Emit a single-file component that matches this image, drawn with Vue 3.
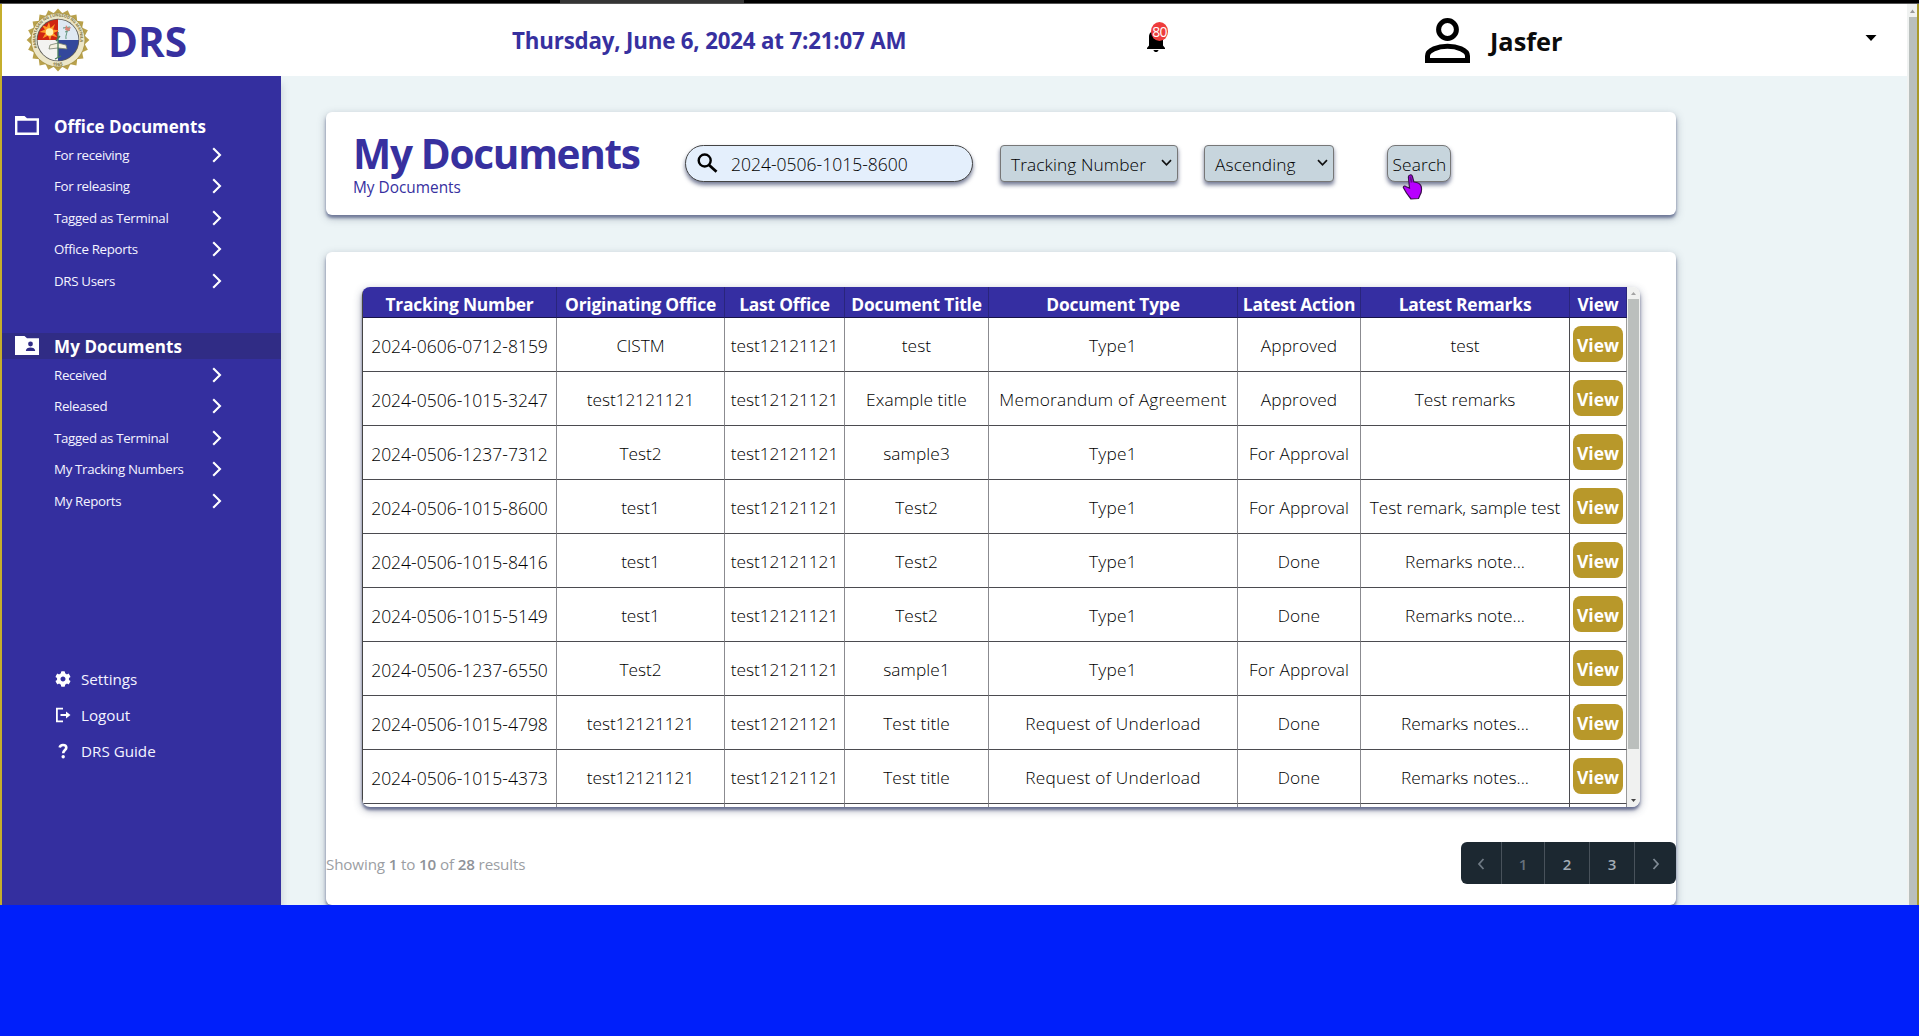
<script setup>
const menus = [
  { title: 'Office Documents', active: false, items: ['For receiving', 'For releasing', 'Tagged as Terminal', 'Office Reports', 'DRS Users'] },
  { title: 'My Documents', active: true, items: ['Received', 'Released', 'Tagged as Terminal', 'My Tracking Numbers', 'My Reports'] },
]
const columns = [
  { label: 'Tracking Number', cls: 'c1' },
  { label: 'Originating Office', cls: 'c2' },
  { label: 'Last Office', cls: 'c3' },
  { label: 'Document Title', cls: 'c4' },
  { label: 'Document Type', cls: 'c5' },
  { label: 'Latest Action', cls: 'c6' },
  { label: 'Latest Remarks', cls: 'c7' },
  { label: 'View', cls: 'c8' },
]
const rows = [
  ['2024-0606-0712-8159', 'CISTM', 'test12121121', 'test', 'Type1', 'Approved', 'test'],
  ['2024-0506-1015-3247', 'test12121121', 'test12121121', 'Example title', 'Memorandum of Agreement', 'Approved', 'Test remarks'],
  ['2024-0506-1237-7312', 'Test2', 'test12121121', 'sample3', 'Type1', 'For Approval', ''],
  ['2024-0506-1015-8600', 'test1', 'test12121121', 'Test2', 'Type1', 'For Approval', 'Test remark, sample test'],
  ['2024-0506-1015-8416', 'test1', 'test12121121', 'Test2', 'Type1', 'Done', 'Remarks note...'],
  ['2024-0506-1015-5149', 'test1', 'test12121121', 'Test2', 'Type1', 'Done', 'Remarks note...'],
  ['2024-0506-1237-6550', 'Test2', 'test12121121', 'sample1', 'Type1', 'For Approval', ''],
  ['2024-0506-1015-4798', 'test12121121', 'test12121121', 'Test title', 'Request of Underload', 'Done', 'Remarks notes...'],
  ['2024-0506-1015-4373', 'test12121121', 'test12121121', 'Test title', 'Request of Underload', 'Done', 'Remarks notes...'],
]
const ring = Array.from({ length: 20 }, (_, i) => i * 18)
</script>

<template>
  <div class="screen">
    <div class="topbar"><div class="tab"></div></div>
    <div class="window">
      <div class="page">
        <header class="header">
          <svg class="seal" viewBox="0 0 64 64">
            <defs>
              <clipPath id="disc"><circle cx="32" cy="32" r="20.5" /></clipPath>
              <path id="arc" d="M11.5 39.5A22.3 22.3 0 1 1 52.5 39.5" />
              <path id="arcb" d="M20 55A26 26 0 0 0 44 55" />
            </defs>
            <g fill="#b9a14b">
              <path v-for="a in ring" :key="a" d="M27 6L32 0.6L37 6L36 12H28Z" :transform="`rotate(${a} 32 32)`" />
            </g>
            <circle cx="32" cy="32" r="27" fill="#ece6c8" stroke="#a58f3d" stroke-width=".8" />
            <circle cx="32" cy="32" r="21.3" fill="#5b5a55" />
            <g clip-path="url(#disc)">
              <rect x="11" y="11" width="21" height="21" fill="#cf2412" />
              <rect x="32" y="11" width="21" height="21" fill="#dfe9f3" />
              <rect x="11" y="32" width="21" height="21" fill="#f3f3f1" />
              <rect x="32" y="32" width="21" height="21" fill="#33489c" />
              <path d="M23 14l1.500 6 4.500-4-2 5.500 6 1-5.500 2.500 4 4.500-6-2-1.500 5-2-5-5.500 3 3-5.500-6-1 5.500-2.500-3.500-4.500 5.500 2z" fill="#ff9b25" />
              <circle cx="23.500" cy="24" r="3.800" fill="#fff3b0" />
              <path d="M40 31c-1-4 2-6 1-11M39 24l5-2M37 20l7-1" stroke="#5d927a" fill="none" />
              <path d="M40 17l2 3 3-1-2 4-4-1z" fill="#dc8375" />
              <path d="M24 37l8-2 8 2 1 4-9-1-9 1z" fill="#f4f1df" stroke="#77806d" stroke-width=".8" />
              <path d="M32 24v25M29 51l6-3M30 33l4-5" stroke="#477d5c" stroke-width="1.300" fill="none" />
            </g>
            <text font-family="Open Sans, sans-serif" font-size="4" font-weight="700" fill="#827743"><textPath href="#arc" textLength="82">PAMANTASAN NG LUNGSOD NG MAYNILA</textPath></text>
            <text font-family="Open Sans, sans-serif" font-size="4.500" font-weight="700" fill="#827743"><textPath href="#arcb" startOffset="7">1965</textPath></text>
          </svg>
          <div class="brand">DRS</div>
          <div class="date">Thursday, June 6, 2024 at 7:21:07 AM</div>
          <div class="bell">
            <svg width="18" height="24" viewBox="0 0 18 24"><path d="M0 21v-1l2-2.500V9c0-4 2-6 7-6s7 3 7 7v7.500l2 2.500v1zM6.500 22h5c-.3 1.400-1.300 2-2.500 2s-2.200-.6-2.500-2z" /></svg>
            <span class="badge">80</span>
          </div>
          <svg class="person" viewBox="0 0 45 45"><circle cx="22.500" cy="11.500" r="8.900" fill="none" stroke="#000" stroke-width="5" /><path d="M2.500 42.500V38C2.500 32 13 28.200 22.500 28.200S42.500 32 42.500 38V42.500Z" fill="none" stroke="#000" stroke-width="5" /></svg>
          <div class="user">Jasfer</div>
          <svg class="caret" width="12" height="6" viewBox="0 0 12 6"><path d="M0.500 0h11L6 6z" /></svg>
        </header>
        <div class="body">
          <nav class="sidebar">
            <section v-for="m in menus" :key="m.title" class="group">
              <div class="group-title" :class="{ active: m.active }">
                <svg v-if="m.active" width="24" height="19" viewBox="0 0 24 19"><path d="M0 0h9.500l2.500 2.300h12V19H0z" fill="#fff" /><circle cx="15.500" cy="8" r="2.400" fill="#302c85" /><path d="M10.800 15c0-4.600 9.400-4.600 9.400 0z" fill="#302c85" /></svg>
                <svg v-else width="24" height="19" viewBox="0 0 24 19"><path fill-rule="evenodd" d="M0 0h9.500l2.500 2.300h12V19H0zM2.400 4.800v11.800h19.200V4.800z" fill="#fff" /></svg>
                <span>{{ m.title }}</span>
              </div>
              <div v-for="it in m.items" :key="it" class="item">
                <span>{{ it }}</span>
                <svg width="10" height="16" viewBox="0 0 10 16"><path d="M1.200 1.200L8 8l-6.800 6.800" fill="none" stroke="#fff" stroke-width="2.100" /></svg>
              </div>
            </section>
            <div class="tools">
              <div class="tool">
                <svg width="16" height="16" viewBox="0 0 512 512"><path fill="#fff" d="M487.400 315.700l-42.600-24.600c4.300-23.200 4.300-47 0-70.200l42.600-24.600c4.900-2.800 7.100-8.600 5.500-14-11.100-35.600-30-67.800-54.700-94.600-3.800-4.100-10-5.100-14.800-2.300L380.800 110c-17.900-15.400-38.500-27.300-60.800-35.100V25.800c0-5.600-3.900-10.500-9.400-11.700-36.700-8.200-74.300-7.800-109.200 0-5.500 1.200-9.400 6.100-9.400 11.700V75c-22.200 7.900-42.800 19.800-60.800 35.100L88.700 85.500c-4.900-2.800-11-1.900-14.800 2.300-24.700 26.700-43.600 58.900-54.700 94.600-1.700 5.400.6 11.200 5.500 14L67.300 221c-4.300 23.200-4.300 47 0 70.200l-42.600 24.600c-4.900 2.800-7.100 8.600-5.500 14 11.100 35.600 30 67.800 54.700 94.600 3.800 4.100 10 5.100 14.800 2.300l42.600-24.600c17.900 15.400 38.500 27.300 60.800 35.100v49.200c0 5.600 3.900 10.500 9.400 11.700 36.700 8.200 74.300 7.800 109.200 0 5.500-1.200 9.400-6.100 9.400-11.700v-49.200c22.200-7.900 42.800-19.800 60.800-35.100l42.600 24.600c4.900 2.800 11 1.900 14.800-2.300 24.700-26.700 43.600-58.900 54.700-94.600 1.500-5.500-.7-11.300-5.600-14.100zM256 336c-44.100 0-80-35.900-80-80s35.900-80 80-80 80 35.900 80 80-35.900 80-80 80z" /></svg>
                <span>Settings</span>
              </div>
              <div class="tool">
                <svg width="16" height="16" viewBox="0 0 16 16"><path d="M8 1.700H1.900v12.600H8M5.500 8h7" fill="none" stroke="#fff" stroke-width="1.800" /><path d="M11 4.500L15.500 8 11 11.500z" fill="#fff" /></svg>
                <span>Logout</span>
              </div>
              <div class="tool">
                <svg width="16" height="16" viewBox="0 0 16 16"><path d="M4.700 4.600C5 2.900 6.200 2 8 2c2 0 3.300 1 3.300 2.700C11.300 7 8.200 7 8.200 10.200" fill="none" stroke="#fff" stroke-width="2.600" /><circle cx="8.200" cy="13.800" r="1.700" fill="#fff" /></svg>
                <span>DRS Guide</span>
              </div>
            </div>
          </nav>
          <main class="main">
            <section class="card head">
              <div class="titles">
                <h1>My Documents</h1>
                <div class="sub">My Documents</div>
              </div>
              <div class="search">
                <svg width="21" height="20" viewBox="0 0 21 20"><circle cx="7.700" cy="7.500" r="6" fill="none" stroke="#000" stroke-width="2.400" /><path d="M12 12l7.500 6.800" stroke="#000" stroke-width="2.800" /></svg>
                <span>2024-0506-1015-8600</span>
              </div>
              <div class="select s1"><span>Tracking Number</span><svg width="11" height="8" viewBox="0 0 11 8"><path d="M1 1.200l4.500 4.600L10 1.200" fill="none" stroke="#111" stroke-width="1.700" /></svg></div>
              <div class="select s2"><span>Ascending</span><svg width="11" height="8" viewBox="0 0 11 8"><path d="M1 1.200l4.500 4.600L10 1.200" fill="none" stroke="#111" stroke-width="1.700" /></svg></div>
              <div class="btn"><span>Search</span>
                <svg class="cursor" width="22" height="26" viewBox="0 0 22 26"><path d="M8 1C9 .5 10 1.200 10.400 2.500l1.500 5.500c3 .2 6.500 1.500 7.300 4.500.8 3.500.3 6-1.200 8.500l-1.500 3.500-7.500.5C6.500 22 3 17 1.300 13.500c0-1.500 1.700-2 3-.8L7.500 14 6.400 3C6.400 2 7 1.300 8 1z" fill="#b800ff" stroke="#39104d" stroke-width="1.200" /><path d="M8.200 2.500l1.500 6" stroke="#6b0c92" stroke-width="2" /></svg>
              </div>
            </section>
            <section class="card list">
              <div class="frame">
                <table>
                  <thead><tr><th v-for="c in columns" :key="c.cls" :class="c.cls">{{ c.label }}</th></tr></thead>
                  <tbody>
                    <tr v-for="r in rows" :key="r[0]">
                      <td v-for="(v, i) in r" :key="i">{{ v }}</td>
                      <td class="act"><div class="view">View</div></td>
                    </tr>
                    <tr><td v-for="c in columns" :key="c.cls"></td></tr>
                  </tbody>
                </table>
                <div class="vbar">
                  <svg width="7" height="12" viewBox="0 0 7 12"><path d="M1 8l2.500-3L6 8z" fill="#a3a3a3" /></svg>
                  <div class="thumb"></div>
                  <svg class="down" width="7" height="12" viewBox="0 0 7 12"><path d="M1 4l2.500 3L6 4z" fill="#444" /></svg>
                </div>
              </div>
              <div class="foot">
                <div class="showing">Showing <b>1</b> to <b>10</b> of <b>28</b> results</div>
                <div class="pager">
                  <span class="p1"><svg width="8" height="12" viewBox="0 0 8 12"><path d="M6.500 1L2 6l4.500 5" fill="none" stroke="#6f7a84" stroke-width="1.800" /></svg></span>
                  <span class="p2">1</span>
                  <span class="p3">2</span>
                  <span class="p3">3</span>
                  <span class="p4"><svg width="8" height="12" viewBox="0 0 8 12"><path d="M1.500 1L6 6l-4.500 5" fill="none" stroke="#7f8a94" stroke-width="1.800" /></svg></span>
                </div>
              </div>
            </section>
          </main>
        </div>
      </div>
      <div class="pagebar">
        <svg width="7" height="13" viewBox="0 0 7 13"><path d="M1 9l2.500-3.500L6 9z" fill="#999" /></svg>
        <div class="pagethumb"></div>
      </div>
    </div>
    <div class="bottom"></div>
  </div>
</template>

<style>
body { margin: 0; overflow: hidden; }
</style>

<style scoped>
* { box-sizing: border-box; }
.screen { width: 1919px; height: 1036px; display: flex; flex-direction: column; overflow: hidden; font-family: "Open Sans", "Noto Sans", sans-serif; white-space: nowrap; }
.screen svg { flex: none; display: block; }
.topbar { height: 4px; flex: none; background: #000; border-bottom: 1px solid #555; display: flex; }
.tab { width: 184px; margin-left: 560px; background: #353535; }
.window { height: 901px; flex: none; display: flex; border-left: 2px solid #c5ae2c; border-right: 2px solid #a9992a; }
.page { width: 1905px; display: flex; flex-direction: column; background: #ecf4f6; overflow: hidden; }
.pagebar { width: 10px; background: #f0f2f1; display: flex; flex-direction: column; align-items: center; }
.pagethumb { width: 8px; margin-left: 2px; flex: 1; background: #b9bfbd; }
.header { height: 72px; flex: none; background: #fff; display: flex; align-items: center; }
.seal { width: 64px; height: 64px; margin-left: 24px; margin-top: -1px; }
.brand { width: 404px; margin-left: 18px; padding-top: 3px; font-size: 40.500px; font-weight: 700; color: #37309f; line-height: 50px; }
.date { width: 635px; font-size: 22.300px; font-weight: 700; letter-spacing: -.18px; color: #37309f; line-height: 30px; margin-top: 2px; }
.bell { width: 18px; height: 24px; position: relative; }
.bell + .person { margin-left: 260px; }
.badge { position: absolute; left: 4px; top: -6px; width: 17px; height: 19px; border-radius: 50%; background: #ee3c3c; color: #fff; font-size: 14px; line-height: 19px; letter-spacing: -.8px; text-align: center; }
.person { width: 45px; height: 45px; }
.user { width: 375px; margin-left: 20px; padding-top: 1px; font-size: 25.300px; font-weight: 700; letter-spacing: 0; line-height: 34px; color: #0b0b0b; }
.caret { margin-top: -4px; }
.body { flex: 1; display: flex; min-height: 0; }
.sidebar { width: 279px; flex: none; background: #342f9f; color: #fff; padding-top: 37px; box-shadow: 0 8px 8px rgba(70,80,100,.25); display: flex; flex-direction: column; }
.group { height: 220px; flex: none; }
.group + .group { height: 219px; }
.group-title { height: 26px; padding-left: 13px; display: flex; align-items: center; gap: 15px; font-size: 17px; font-weight: 700; }
.group-title svg { margin-top: -2px; }
.group-title.active { background: #302c85; }
.group-title.active span { padding-top: 1px; letter-spacing: .1px; }
.item { height: 31.500px; display: flex; align-items: center; justify-content: space-between; padding: 0 59px 0 52px; font-size: 13.300px; letter-spacing: -.32px; color: #f4f4ff; }
.tools { margin-top: 109px; padding-left: 53px; }
.tool { height: 36px; display: flex; align-items: center; gap: 10px; font-size: 15.200px; color: #f4f4ff; }
.main { padding: 36px 0 0 45px; width: 1395px; display: flex; flex-direction: column; gap: 37px; }
.card { background: #fff; border-radius: 6px; box-shadow: 0 3px 3px rgba(50,60,110,.55), 0 3px 8px rgba(50,60,90,.35); }
.head { height: 103px; flex: none; display: flex; padding-left: 27px; }
.titles { width: 332px; padding-top: 17px; color: #37309f; }
h1 { margin: 0; font-size: 40.500px; line-height: 50px; font-weight: 700; height: 49px; letter-spacing: -1.300px; }
.sub { font-size: 15.400px; line-height: 20px; }
.search, .select, .btn { height: 37px; margin-top: 33px; border: 1px solid #444; box-shadow: 0 3px 4px rgba(40,50,90,.65); display: flex; align-items: center; font-size: 17.300px; color: #000; font-weight: 350; letter-spacing: .1px; }
.search span, .select span, .btn span { padding-top: 1px; }
.btn span { padding-top: 2px; padding-left: 1px; }
.search { width: 288px; border-radius: 18.500px; background: #e4effc; padding-left: 11px; font-size: 17.500px; letter-spacing: 0; }
.search svg { margin-top: -2px; margin-right: 13px; }
.select { background: #c7d5dd; border-color: #777; border-radius: 4px; justify-content: space-between; padding: 0 5px 0 10px; }
.s1 { width: 178px; margin-left: 27px; }
.s2 { width: 130px; margin-left: 26px; }
.select svg { margin-top: -2px; }
.btn { position: relative; width: 64px; margin-left: 53px; border-radius: 8px; justify-content: center; background: #c7d5dd; border-color: #777; }
.cursor { position: absolute; left: 14px; top: 28px; }
.list { flex: 1; height: 653px; }
.frame { margin: 35px 0 0 36px; width: 1278px; height: 520px; overflow: hidden; display: flex; border-radius: 8px; box-shadow: 0 3px 3px rgba(50,60,110,.6), 0 3px 8px rgba(50,60,90,.45); }
table { width: 1265px; table-layout: fixed; border-collapse: separate; border-spacing: 0; border-left: 1px solid #444; flex: none; }
th { height: 31px; padding: 3px 0 0; background: #352ea2; color: #fff; font-size: 17.400px; line-height: 24px; font-weight: 700; border-right: 1px solid #29257c; border-bottom: 1px solid #171348; letter-spacing: -.2px; }
td { height: 54px; padding: 3px 0 0; text-align: center; font-size: 17.300px; letter-spacing: .1px; font-weight: 350; color: #000; border-right: 1px solid #8b8b90; border-bottom: 1px solid #4b4b50; line-height: 24px; }
td:first-child { font-size: 17.500px; letter-spacing: 0; padding-top: 2px; }
td:nth-child(2), td:nth-child(3) { letter-spacing: -.05px; }
td:nth-child(5) { letter-spacing: .25px; }
td:nth-child(7) { border-right-color: #4b4b50; letter-spacing: 0; }
.c1 { width: 194px; } .c2 { width: 168px; } .c3 { width: 120px; } .c4 { width: 144px; } .c5 { width: 249px; } .c6 { width: 123px; } .c7 { width: 209px; }
.view { width: 50px; height: 36px; line-height: 38px; margin: -4px auto 0; border-radius: 8px; background: #b8982a; color: #fff; font-weight: 700; font-size: 17.500px; letter-spacing: 0; }
td.act { border-right-color: #999; }
.vbar { width: 13px; background: #f0f1f0; display: flex; flex-direction: column; align-items: center; }
.thumb { width: 11px; height: 450px; background: #bbbfbd; }
.down { margin-top: auto; }
.foot { margin-top: 35px; display: flex; justify-content: space-between; align-items: center; }
.showing { font-size: 15.200px; color: #9b9ea3; letter-spacing: -.15px; padding-top: 1px; }
.showing b { font-weight: 600; color: #8e9298; }
.pager { height: 42px; width: 215px; display: flex; background: #1c2831; border-radius: 6px; font-size: 15px; font-weight: 600; color: #a3acb5; }
.pager span { display: flex; align-items: center; justify-content: center; border-right: 1px solid #48525b; padding-top: 1px; }
.p1 { width: 41px; } .p2 { width: 43px; color: #66717b; } .p3 { width: 45px; } .pager .p4 { width: 41px; border: 0; }
.bottom { height: 131px; background: #001ffa; }
</style>
